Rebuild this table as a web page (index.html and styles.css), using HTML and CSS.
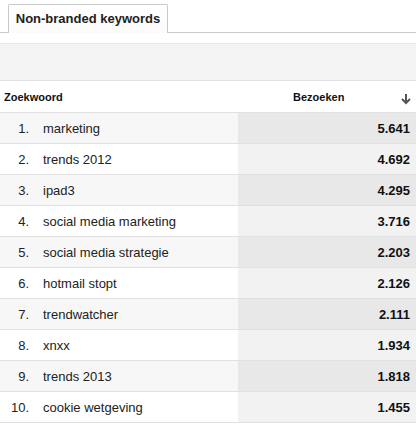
FILE: index.html
```html
<!DOCTYPE html>
<html>
<head>
<meta charset="utf-8">
<link rel="stylesheet" href="styles.css">
</head>
<body>
<div class="tabbar">
  <div class="tab">Non-branded keywords</div>
</div>
<div class="band"></div>
<table class="grid">
  <thead>
    <tr>
      <th class="kw-h">Zoekwoord</th>
      <th class="val-h"><span>Bezoeken</span>
        <svg class="arrow" width="12" height="12" viewBox="0 0 12 12"><path d="M6 1v9M2 6l4 4 4-4" fill="none" stroke="#555" stroke-width="2"/></svg>
      </th>
    </tr>
  </thead>
  <tbody>
    <tr class="odd"><td class="kw"><span class="n">1.</span>marketing</td><td class="val">5.641</td></tr>
    <tr><td class="kw"><span class="n">2.</span>trends 2012</td><td class="val">4.692</td></tr>
    <tr class="odd"><td class="kw"><span class="n">3.</span>ipad3</td><td class="val">4.295</td></tr>
    <tr><td class="kw"><span class="n">4.</span>social media marketing</td><td class="val">3.716</td></tr>
    <tr class="odd"><td class="kw"><span class="n">5.</span>social media strategie</td><td class="val">2.203</td></tr>
    <tr><td class="kw"><span class="n">6.</span>hotmail stopt</td><td class="val">2.126</td></tr>
    <tr class="odd"><td class="kw"><span class="n">7.</span>trendwatcher</td><td class="val">2.111</td></tr>
    <tr><td class="kw"><span class="n">8.</span>xnxx</td><td class="val">1.934</td></tr>
    <tr class="odd"><td class="kw"><span class="n">9.</span>trends 2013</td><td class="val">1.818</td></tr>
    <tr><td class="kw"><span class="n">10.</span>cookie wetgeving</td><td class="val">1.455</td></tr>
  </tbody>
</table>
</body>
</html>
```
FILE: styles.css
```css
html, body {
  margin: 0;
  padding: 0;
  background: #fff;
  font-family: "Liberation Sans", Arial, sans-serif;
  color: #222;
}
.tabbar {
  height: 32px;
  border-bottom: 1px solid #c9c9c9;
  padding-left: 8px;
  display: flex;
  align-items: flex-end;
}
.tab {
  width: 158px;
  height: 28px;
  margin-bottom: -1px;
  border: 1px solid #c9c9c9;
  border-bottom: none;
  border-radius: 2px 2px 0 0;
  background: linear-gradient(#fff, #fbfbfb);
  box-sizing: content-box;
  font-size: 13px;
  font-weight: bold;
  color: #222;
  text-align: center;
  line-height: 28px;
}
.band {
  margin-top: 10px;
  height: 36px;
  background: #f4f4f4;
  border-top: 1px solid #e8e8e8;
  border-bottom: 1px solid #e2e2e2;
}
.grid {
  width: 100%;
  border-collapse: collapse;
  table-layout: fixed;
}
.grid th {
  height: 31px;
  font-size: 11px;
  font-weight: bold;
  color: #111;
  padding: 0;
  border-bottom: 1px solid #e0e0e0;
  vertical-align: middle;
}
.kw-h {
  width: 238px;
  text-align: left;
  padding-left: 4px !important;
  box-sizing: border-box;
}
.val-h {
  text-align: left;
  position: relative;
}
.val-h span {
  margin-left: 55px;
}
.arrow {
  position: absolute;
  right: 4px;
  top: 12px;
}
.grid td {
  height: 30px;
  padding: 0;
  font-size: 13px;
  border-bottom: 1px solid #e0e0e0;
  vertical-align: middle;
}
.kw {
  background: #fff;
  color: #222;
}
.n {
  display: inline-block;
  width: 29px;
  text-align: right;
  margin-right: 14px;
}
.val {
  text-align: right;
  font-weight: bold;
  color: #111;
  padding-right: 6px !important;
  background: #f2f2f2;
}
tr.odd .kw { background: #f7f7f7; }
tr.odd .val { background: #e8e8e8; }
```
